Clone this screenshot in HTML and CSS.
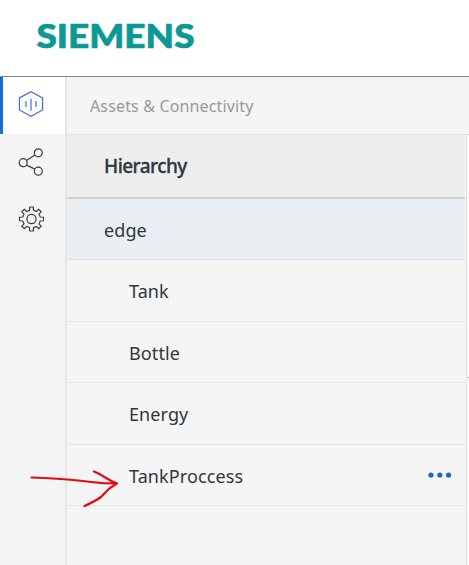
FILE: index.html
```html
<!DOCTYPE html>
<html lang="en">
<head>
<meta charset="utf-8">
<title>Assets &amp; Connectivity</title>
<link rel="stylesheet" href="styles.css">
</head>
<body>
<header class="header">
  <svg class="logo" width="240" height="76" role="img" aria-label="SIEMENS"><text x="36.5" y="48.3" textLength="158" lengthAdjust="spacingAndGlyphs">SIEMENS</text></svg>
</header>
<div class="app">
  <nav class="rail">
    <a class="rail-item active"><svg width="26" height="28" viewBox="0 0 26 28"><path d="M13 1.7 24.6 7.9V20L13 26.3 1.4 20V7.9ZM8 11v6M13 8.8v12M18 11v6"/></svg></a>
    <a class="rail-item"><svg width="26" height="28" viewBox="0 0 26 28"><circle cx="5.2" cy="14.7" r="4"/><circle cx="20.3" cy="4.8" r="4"/><circle cx="20.3" cy="23.2" r="4"/><path d="m8.5 12.5 8.4-5.4M8.5 17.1l8.4 4"/></svg></a>
    <a class="rail-item"><svg width="26" height="28" viewBox="-13.5 -14 26 28"><circle r="4.6"/><path d="M-2-8.7-1.8-12H1.8L2-8.7 4.8-7.5 7.2-9.7 9.7-7.2 7.5-4.8 8.7-2 12-1.8V1.8L8.7 2 7.5 4.8 9.7 7.2 7.2 9.7 4.8 7.5 2 8.7 1.8 12H-1.8L-2 8.7-4.8 7.5-7.2 9.7-9.7 7.2-7.5 4.8-8.7 2-12 1.8V-1.8L-8.7-2-7.5-4.8-9.7-7.2-7.2-9.7-4.8-7.5Z"/></svg></a>
  </nav>
  <main class="main">
    <div class="topbar"><span>Assets &amp; Connectivity</span></div>
    <div class="content">
      <section class="panel">
        <h1 class="panel-title"><span>Hierarchy</span></h1>
        <ul class="tree">
          <li class="node root"><span>edge</span></li>
          <li class="node"><span>Tank</span></li>
          <li class="node"><span>Bottle</span></li>
          <li class="node"><span>Energy</span></li>
          <li class="node"><span>TankProccess</span><svg class="more" width="26" height="6"><circle cx="3" cy="3" r="2.6"/><circle cx="11.8" cy="3" r="2.6"/><circle cx="20.6" cy="3" r="2.6"/></svg></li>
        </ul>
      </section>
      <aside class="detail"><div class="detail-line"></div></aside>
    </div>
  </main>
</div>
<svg class="arrow" width="95" height="46" viewBox="26 464 95 46"><path d="M31.5 477.5C55 477.8 79 480.5 103 483.2L117 483.4M94 471.5C103 475 109 481 117 483.4C108 488 106 492 101 497C97 500 91 503 84.5 506"/></svg>
</body>
</html>
```
FILE: styles.css
```css
* { box-sizing: border-box; }
body {
  margin: 0;
  height: 565px;
  overflow: hidden;
  display: flex;
  flex-direction: column;
  font-family: "Noto Sans", sans-serif;
  color: #2d373c;
  background: #fff;
}
.header { height: 77px; flex: none; border-bottom: 1px solid #788791; }
.logo { display: block; }
.logo text { font-family: Lato, sans-serif; font-size: 33px; font-weight: 900; fill: #0c9996; stroke: #0c9996; stroke-width: .7; }
.app { flex: 1; display: flex; min-height: 0; }
.rail { width: 67px; flex: none; background: #f4f4f4; border-right: 2px solid #e6e6e6; }
.rail-item { height: 57px; display: flex; align-items: center; padding: 0 0 2px 18px; }
.rail-item svg { fill: none; stroke: #3c3c3c; stroke-width: 1.2; }
.rail-item.active {
  height: 57px;
  padding: 0 0 3px 15px;
  border-left: 3px solid #0f6fe0;
  background: #fff;
}
.rail-item.active svg { stroke: #3f6fc6; }
.main { flex: 1; display: flex; flex-direction: column; min-width: 0; }
.topbar {
  height: 58px;
  flex: none;
  display: flex;
  align-items: center;
  padding-left: 23px;
  border-bottom: 1px solid #e2e2e2;
  background: #f5f5f5;
  color: #999;
  font-size: 16px;
  letter-spacing: .15px;
  white-space: nowrap;
}
.content { flex: 1; display: flex; min-height: 0; }
.panel { width: 400px; flex: none; background: #f5f5f5; border-right: 1px solid #e0e0e0; }
.panel-title {
  height: 64px;
  width: 398px;
  margin: 0;
  display: flex;
  align-items: center;
  padding-left: 37px;
  border-bottom: 2px solid #cdcfd1;
  background: #eee;
  font-size: 19px;
  font-weight: 500;
  letter-spacing: -.55px;
  -webkit-text-stroke: .3px #2d373c;
}
.tree { list-style: none; margin: 0; padding: 0; }
.node {
  height: 61.5px;
  width: 398px;
  display: flex;
  align-items: center;
  padding: 1px 10px 0 62px;
  border-bottom: 1px solid #e3e4e5;
  font-size: 18px;
  font-weight: 400;
  letter-spacing: .1px;
}
.node span { padding-top: 1px; }
.root { height: 61px; padding-left: 37px; background: #e9eff3; border-color: #d9e0e5; }
.more { margin: 0 1px 1px auto; fill: #1768c8; }
.detail { flex: 1; padding-top: 242px; background: #fafafa; }
.detail-line { height: 1px; background: #bbb; }
.arrow { position: absolute; left: 26px; top: 464px; fill: none; stroke: #e20a10; stroke-width: 2.2; stroke-linecap: round; stroke-linejoin: round; }
```
